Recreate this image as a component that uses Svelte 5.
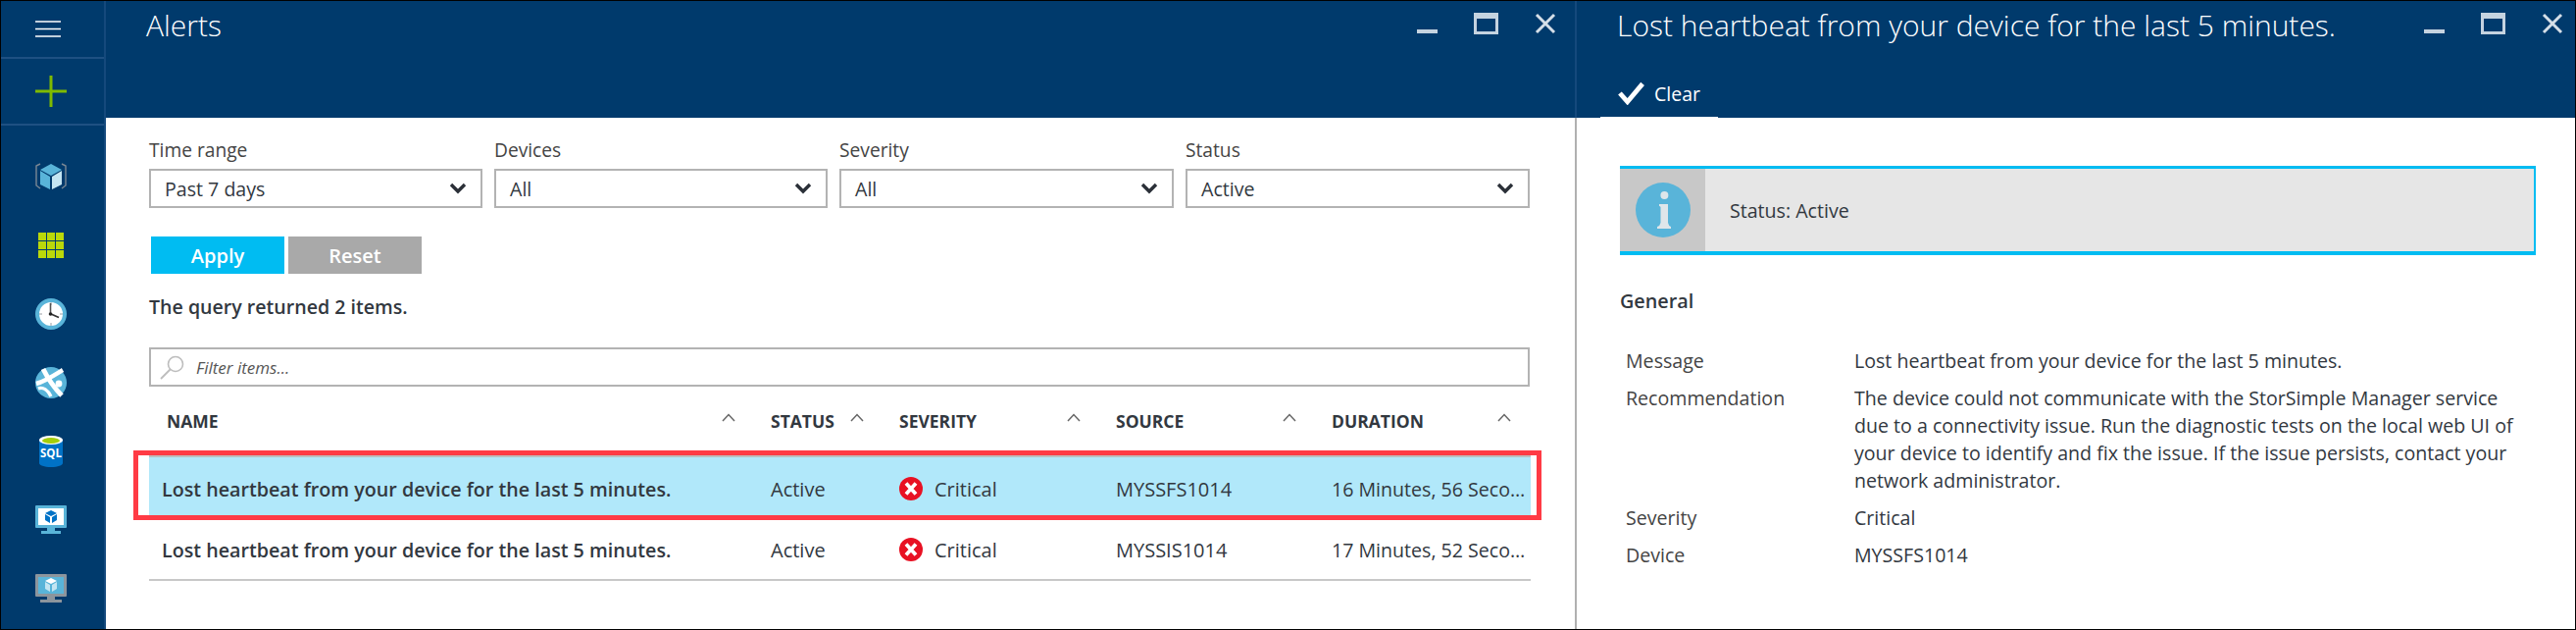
<script>
  const filters = [
    { label: 'Time range', value: 'Past 7 days' },
    { label: 'Devices', value: 'All' },
    { label: 'Severity', value: 'All' },
    { label: 'Status', value: 'Active' }
  ];

  const columns = ['NAME', 'STATUS', 'SEVERITY', 'SOURCE', 'DURATION'];

  const alerts = [
    { name: 'Lost heartbeat from your device for the last 5 minutes.', status: 'Active', severity: 'Critical', source: 'MYSSFS1014', duration: '16 Minutes, 56 Seconds', selected: true },
    { name: 'Lost heartbeat from your device for the last 5 minutes.', status: 'Active', severity: 'Critical', source: 'MYSSIS1014', duration: '17 Minutes, 52 Seconds', selected: false }
  ];

  const details = [
    { label: 'Message', value: 'Lost heartbeat from your device for the last 5 minutes.' },
    { label: 'Recommendation', value: 'The device could not communicate with the StorSimple Manager service due to a connectivity issue. Run the diagnostic tests on the local web UI of your device to identify and fix the issue. If the issue persists, contact your network administrator.' },
    { label: 'Severity', value: 'Critical' },
    { label: 'Device', value: 'MYSSFS1014' }
  ];
</script>

{#snippet windowButtons()}
  <div class="window-buttons">
    <svg width="22" height="22" viewBox="0 0 22 22"><rect x="0" y="17" width="21" height="4" fill="#c5d3e0" /></svg>
    <svg width="26" height="22" viewBox="0 0 26 22"><rect x="1.5" y="1.5" width="22" height="19" fill="none" stroke="#c5d3e0" stroke-width="3" /><rect x="1" y="1" width="23" height="5" fill="#c5d3e0" /></svg>
    <svg width="22" height="22" viewBox="0 0 22 22"><path d="M2 2 L20 20 M20 2 L2 20" stroke="#d5dfe8" stroke-width="3" fill="none" /></svg>
  </div>
{/snippet}

{#snippet chevron()}
  <svg class="chevron" width="18" height="12" viewBox="0 0 18 12"><path d="M2 2 L9 9 L16 2" fill="none" stroke="#2b3038" stroke-width="3.4" /></svg>
{/snippet}

{#snippet criticalIcon()}
  <svg width="24" height="24" viewBox="0 0 24 24"><circle cx="12" cy="12" r="12" fill="#e81123" /><path d="M7 6.5 L17 17.5 M17 6.5 L7 17.5" stroke="#fff" stroke-width="3.8" /></svg>
{/snippet}

<div class="screen">
  <nav class="sidebar">
    <div class="side-btn menu">
      <svg width="26" height="17" viewBox="0 0 26 17"><path d="M0 1 H26 M0 8.5 H26 M0 16 H26" stroke="#fff" stroke-width="1.6" /></svg>
    </div>
    <div class="side-btn add">
      <svg width="32" height="32" viewBox="0 0 32 32"><path d="M16 0 V32 M0 16 H32" stroke="#7fba00" stroke-width="3" /></svg>
    </div>
    <div class="side-icons">
      <div class="side-icon">
        <svg width="32" height="28" viewBox="0 0 32 28">
          <path d="M5 1 L1 3 V23 L5 26 M27 1 L31 3 V23 L27 26" fill="none" stroke="#7a8794" stroke-width="1.4" />
          <path d="M16 1 L27 7 L16 13 L5 7 Z" fill="#59b4d9" />
          <path d="M5 8 L15 14 V27 L5 22 Z" fill="#59b4d9" />
          <path d="M27 8 L17 14 V27 L27 22 Z" fill="#c4e5f2" />
        </svg>
      </div>
      <div class="side-icon">
        <svg width="26" height="26" viewBox="0 0 26 26" fill="#bad80a">
          <rect x="0" y="0" width="8" height="8" /><rect x="9" y="0" width="8" height="8" /><rect x="18" y="0" width="8" height="8" />
          <rect x="0" y="9" width="8" height="8" /><rect x="9" y="9" width="8" height="8" /><rect x="18" y="9" width="8" height="8" />
          <rect x="0" y="18" width="8" height="8" /><rect x="9" y="18" width="8" height="8" /><rect x="18" y="18" width="8" height="8" />
        </svg>
      </div>
      <div class="side-icon">
        <svg width="32" height="32" viewBox="0 0 32 32">
          <circle cx="16" cy="16" r="14" fill="#fff" stroke="#59b4d9" stroke-width="4" />
          <path d="M16 4 V7 M16 25 V28 M4 16 H7 M25 16 H28" stroke="#9aa0a6" stroke-width="1" />
          <path d="M15.5 5 V16" stroke="#555" stroke-width="1.6" />
          <path d="M16 16 L24 19.5" stroke="#333" stroke-width="1.8" />
          <circle cx="15.5" cy="16" r="1.8" fill="#222" />
        </svg>
      </div>
      <div class="side-icon">
        <svg width="32" height="32" viewBox="0 0 32 32">
          <circle cx="16" cy="16" r="16" fill="#59b4d9" />
          <path d="M8 2 C12 10 20 22 27 29" stroke="#fff" stroke-width="5" fill="none" />
          <path d="M1 17 C9 15 20 8 28 3" stroke="#fff" stroke-width="4.5" fill="none" />
          <path d="M3 22 C8 20 13 24 16 30" stroke="#fff" stroke-width="3.4" fill="none" />
          <circle cx="24" cy="17" r="3.4" fill="#fff" />
        </svg>
      </div>
      <div class="side-icon">
        <svg width="24" height="32" viewBox="0 0 24 32">
          <path d="M0 4 V28 C0 30 5 32 12 32 C19 32 24 30 24 28 V4 Z" fill="#0072c6" />
          <ellipse cx="12" cy="4.5" rx="12" ry="4.5" fill="#fff" />
          <ellipse cx="12" cy="5" rx="9" ry="3" fill="#a4ce0c" />
          <text x="12" y="22" text-anchor="middle" class="sql-text">SQL</text>
        </svg>
      </div>
      <div class="side-icon">
        <svg width="32" height="30" viewBox="0 0 32 30">
          <rect x="0" y="0" width="32" height="23" rx="1" fill="#59b4d9" />
          <rect x="3" y="3" width="26" height="17" fill="#fff" />
          <path d="M12 23 H20 V26 H12 Z" fill="#59b4d9" />
          <rect x="6" y="26" width="20" height="3" fill="#59b4d9" />
          <path d="M16 5 L22 8 L16 11 L10 8 Z" fill="#0072c6" />
          <path d="M10 9 L15 12 V18 L10 15 Z M22 9 L17 12 V18 L22 15 Z" fill="#0072c6" />
        </svg>
      </div>
      <div class="side-icon">
        <svg width="32" height="30" viewBox="0 0 32 30">
          <rect x="0" y="0" width="32" height="23" rx="1" fill="#8c959d" />
          <rect x="3" y="3" width="26" height="17" fill="#59b4d9" />
          <path d="M12 23 H20 V26 H12 Z" fill="#8c959d" />
          <rect x="5" y="26" width="22" height="3" fill="#8c959d" />
          <path d="M16 4 L22 7 L16 10 L10 7 Z" fill="#fff" />
          <path d="M10 8 L15 11 V18 L10 15 Z M22 8 L17 11 V18 L22 15 Z" fill="#c4e5f2" />
        </svg>
      </div>
    </div>
  </nav>

  <section class="blade alerts">
    <header class="blade-head">
      <h1>Alerts</h1>
      {@render windowButtons()}
    </header>
    <div class="blade-body">
      <div class="filters">
        {#each filters as filter}
          <div class="filter">
            <div class="filter-label">{filter.label}</div>
            <div class="select">
              <span>{filter.value}</span>
              {@render chevron()}
            </div>
          </div>
        {/each}
      </div>

      <div class="actions">
        <button class="apply" type="button">Apply</button>
        <button class="reset" type="button">Reset</button>
      </div>

      <p class="query-result">The query returned 2 items.</p>

      <div class="search">
        <svg width="26" height="26" viewBox="0 0 26 26"><circle cx="16" cy="10" r="7.5" fill="none" stroke="#bdbdbd" stroke-width="1.6" /><path d="M10.5 15.5 L1 25" stroke="#bdbdbd" stroke-width="1.8" /></svg>
        <span>Filter items...</span>
      </div>

      <div class="table">
        <div class="tr head">
          {#each columns as col}
            <div class="th">
              <span>{col}</span>
              <svg width="14" height="9" viewBox="0 0 14 9"><path d="M1 8 L7 1.5 L13 8" fill="none" stroke="#666" stroke-width="1.5" /></svg>
            </div>
          {/each}
        </div>
        {#each alerts as alert}
          <div class="tr row" class:selected={alert.selected}>
            <div class="td name">{alert.name}</div>
            <div class="td">{alert.status}</div>
            <div class="td severity">{@render criticalIcon()}<span>{alert.severity}</span></div>
            <div class="td">{alert.source}</div>
            <div class="td duration">{alert.duration}</div>
          </div>
        {/each}
      </div>
    </div>
  </section>

  <section class="blade detail">
    <header class="blade-head">
      <h1>Lost heartbeat from your device for the last 5 minutes.</h1>
      {@render windowButtons()}
      <div class="command-bar">
        <div class="command">
          <svg width="28" height="24" viewBox="0 0 28 24"><path d="M2 12 L10 21 L26 2" fill="none" stroke="#fff" stroke-width="5" /></svg>
          <span>Clear</span>
        </div>
      </div>
    </header>
    <div class="detail-body">
      <div class="banner">
        <div class="banner-icon">
          <svg width="56" height="56" viewBox="0 0 56 56">
            <circle cx="28" cy="28" r="28" fill="#59b4d9" />
            <circle cx="29.4" cy="13" r="4" fill="#dfe6ea" />
            <path d="M24 22 H33 V41 Q33.5 44 36 45 V47 H22 V45 Q25 44 25.5 41 V25 Q25 24 24 24 Z" fill="#dfe6ea" />
          </svg>
        </div>
        <div class="banner-text">Status: Active</div>
      </div>

      <h2>General</h2>

      <dl>
        {#each details as item}
          <dt>{item.label}</dt>
          <dd>{item.value}</dd>
        {/each}
      </dl>
    </div>
  </section>
</div>

<style>
  :global(body) {
    margin: 0;
    background: #000;
  }

  .screen {
    display: flex;
    width: 2627px;
    height: 642px;
    box-sizing: border-box;
    border: 1px solid #000;
    background: #fff;
    font-family: "Open Sans", "Noto Sans", sans-serif;
    font-size: 18px;
    color: #32383f;
    overflow: hidden;
  }

  .sidebar {
    width: 107px;
    flex: none;
    background: #003a6c;
    border-right: 2px solid #14497c;
    box-sizing: border-box;
  }
  .side-btn {
    display: flex;
    justify-content: center;
    align-items: center;
    border-bottom: 2px solid #1e5082;
    padding-right: 3px;
  }
  .side-btn.menu {
    height: 57px;
    padding-right: 9px;
  }
  .add {
    height: 66px;
  }
  .side-icons {
    padding-top: 17px;
  }
  .side-icon {
    display: flex;
    justify-content: center;
    align-items: center;
    height: 70px;
    padding-right: 3px;
  }
  .sql-text {
    font-size: 11.5px;
    font-weight: 700;
    fill: #fff;
  }

  .blade {
    display: flex;
    flex-direction: column;
  }
  .alerts {
    width: 1498px;
    flex: none;
    border-right: 2px solid #b0b0b0;
  }
  .detail {
    flex: 1;
  }

  .blade-head {
    position: relative;
    height: 119px;
    flex: none;
    background: #003a6c;
    color: #fff;
    display: flex;
    justify-content: space-between;
    align-items: flex-start;
  }
  .alerts .blade-head {
    padding: 0 19px 0 41px;
  }
  .detail .blade-head {
    padding: 0 12px 0 41px;
    flex-wrap: wrap;
    border-left: 2px solid #14497c;
    margin-left: -2px;
  }
  h1 {
    margin: 0;
    font-size: 30px;
    font-weight: 300;
    line-height: 49px;
  }

  .window-buttons {
    display: flex;
    gap: 36px;
    padding-top: 12px;
    align-items: center;
  }

  .command-bar {
    width: 100%;
    display: flex;
    margin: 0 0 0 -17px;
    position: absolute;
    left: 41px;
    bottom: 0;
  }
  .command {
    display: flex;
    align-items: center;
    gap: 10px;
    height: 49px;
    padding: 0 18px;
    width: 120px;
    box-sizing: border-box;
    border-bottom: 1px solid #fff;
    font-size: 19.5px;
  }

  .blade-body {
    padding: 21px 45px 0 44px;
  }

  .filters {
    display: grid;
    grid-template-columns: 340px 340px 341px 351px;
    column-gap: 12px;
  }
  .filter-label {
    line-height: 24px;
    font-size: 19.2px;
    color: #444;
    margin-bottom: 7px;
  }
  .select {
    display: flex;
    justify-content: space-between;
    align-items: center;
    height: 40px;
    box-sizing: border-box;
    border: 2px solid #b3b3b3;
    padding: 0 14px 0 14px;
    font-size: 19.6px;
  }

  .actions {
    display: flex;
    gap: 4px;
    margin: 29px 0 0 2px;
  }
  button {
    width: 136px;
    height: 38px;
    border: none;
    padding: 0;
    color: #fff;
    font-family: inherit;
    font-size: 20px;
    font-weight: 600;
  }
  .apply {
    background: #00bcf2;
  }
  .reset {
    background: #a9a9a9;
  }

  .query-result {
    margin: 20px 0 27px;
    line-height: 28px;
    font-size: 19.6px;
    font-weight: 600;
  }

  .search {
    display: flex;
    align-items: center;
    gap: 11px;
    height: 40px;
    width: 1408px;
    box-sizing: border-box;
    border: 2px solid #b3b3b3;
    padding: 0 0 0 9px;
    font-size: 17px;
    font-style: italic;
    color: #555;
  }

  .tr {
    display: grid;
    grid-template-columns: 634px 131px 221px 220px 203px;
  }
  .head {
    height: 70px;
    align-items: center;
    font-size: 17.5px;
    font-weight: 700;
  }
  .th {
    display: flex;
    justify-content: space-between;
    align-items: center;
    padding-right: 36px;
  }
  .th:first-child {
    padding-left: 18px;
  }
  .th:last-child {
    padding-right: 20px;
  }
  .th svg {
    margin-top: -8px;
  }

  .row {
    position: relative;
    align-items: center;
    height: 54px;
    padding-top: 5px;
    border-top: 2px solid #bdbdbd;
    box-sizing: content-box;
  }
  .row + .row {
    border-top: none;
    height: 60px;
    border-bottom: 2px solid #c8c8c8;
  }
  .row.selected {
    background: #b1e8fa;
  }
  .row.selected::after {
    content: '';
    position: absolute;
    inset: -7px -11px -5px -16px;
    border: 5px solid #ff3b45;
    pointer-events: none;
  }
  .td {
    font-size: 20px;
    white-space: nowrap;
  }
  .name {
    padding-left: 13px;
    font-size: 19.7px;
    font-weight: 600;
  }
  .severity {
    display: flex;
    align-items: center;
    gap: 12px;
  }
  .duration {
    overflow: hidden;
    text-overflow: ellipsis;
    font-size: 19.6px;
  }

  .detail-body {
    padding: 49px 40px 0 44px;
  }
  .banner {
    display: flex;
    height: 91px;
    box-sizing: border-box;
    border: solid #00bcf2;
    border-width: 3px 2px 4px 0;
    background: #e6e6e6;
  }
  .banner-icon {
    display: flex;
    justify-content: center;
    align-items: center;
    width: 87px;
    background: #c8c8c8;
  }
  .banner-text {
    display: flex;
    align-items: center;
    padding-left: 25px;
    font-size: 19.6px;
  }
  h2 {
    margin: 33px 0 0;
    font-size: 19.8px;
    font-weight: 600;
    line-height: 28px;
  }

  dl {
    display: grid;
    grid-template-columns: 233px 1fr;
    margin: 33px 0 0 6px;
    row-gap: 10px;
    font-size: 19.6px;
    line-height: 28px;
  }
  dt {
    color: #444;
  }
  dd {
    margin: 0;
  }
</style>
